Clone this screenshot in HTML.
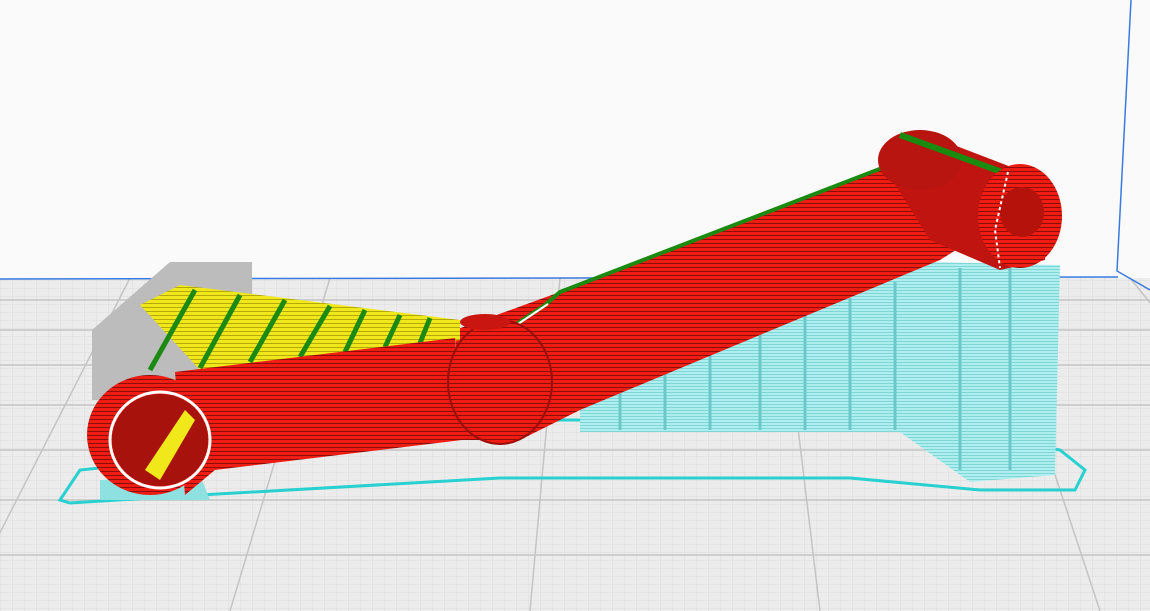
<!DOCTYPE html>
<html><head><style>html,body{margin:0;padding:0;background:#fafafa;overflow:hidden}svg{display:block}</style></head>
<body>
<svg width="1150" height="611" viewBox="0 0 1150 611" xmlns="http://www.w3.org/2000/svg">
<defs>
<pattern id="fine" width="12" height="8" patternUnits="userSpaceOnUse"><rect width="12" height="8" fill="#ececec"/><path d="M0 0H12M0 0V8" stroke="#dcdcdc" stroke-width="1"/></pattern>
<pattern id="stripe" width="6" height="4" patternUnits="userSpaceOnUse"><rect width="6" height="4" fill="#ee1c12"/><rect y="3" width="6" height="1" fill="#8a0e0a"/></pattern>
<pattern id="cyan" width="6" height="3" patternUnits="userSpaceOnUse"><rect width="6" height="3" fill="#aeeeee"/><rect y="2" width="6" height="1" fill="#7fd6d6"/></pattern>
<pattern id="yel" width="6" height="4" patternUnits="userSpaceOnUse"><rect width="6" height="4" fill="#f0e81a"/><rect y="3" width="6" height="1" fill="#b5a80a"/></pattern>
</defs>
<rect width="1150" height="611" fill="#fafafa"/>
<rect y="278" width="1150" height="333" fill="url(#fine)"/>
<g stroke="#c4c4c4" stroke-width="1.5" fill="none">
<path d="M0 300H1150M0 330H1150M0 365H1150M0 405H1150M0 450H1150M0 500H1150M0 555H1150"/>
<path d="M130 278L-40 611M330 278L230 611M560 278L530 611M780 278L820 611M990 278L1100 611M1130 278L1400 611"/>
</g>
<path d="M0 279L1118 277" stroke="#3a7ae0" stroke-width="1.5"/>
<path d="M1131 0L1117 271L1150 290" stroke="#3a7ae0" stroke-width="1.5" fill="none"/>
<polygon points="170,262 252,262 252,400 92,400 92,330" fill="#bcbcbc"/>
<path d="M60 500L80 470L560 420L880 420L1060 450L1085 470L1075 490L980 490L850 478L500 478L200 495L70 503Z" fill="none" stroke="#28d0d0" stroke-width="3"/>
<polygon points="580,400 930,262 1060,265 1055,475 970,482 900,432 580,432" fill="url(#cyan)"/>
<g stroke="#6cc8c8" stroke-width="3"><path d="M620 385V430M665 368V430M710 350V430M760 332V430M805 315V430M850 298V430M895 282V430M960 268V470M1010 268V470"/></g>
<polygon points="100,480 200,475 210,500 100,500" fill="#8fe0e0"/>
<polygon points="455,330 560,292 890,165 950,165 980,235 940,260 580,410 520,440 460,440" fill="url(#stripe)"/>
<path d="M515 325L545 305L560 292L890 165" stroke="#1a8a10" stroke-width="4" fill="none"/>
<path d="M518 324L548 304" stroke="#fff" stroke-width="2"/>
<polygon points="140,305 180,285 460,320 460,340 200,370" fill="url(#yel)"/>
<g stroke="#1b8a12" stroke-width="5"><path d="M195 290L150 370M240 295L200 368M285 300L250 362M330 306L300 357M365 310L345 352M400 315L385 347M430 318L420 343"/></g>
<polygon points="175,372 455,338 462,440 215,470 185,495" fill="url(#stripe)"/>
<ellipse cx="500" cy="382" rx="52" ry="62" fill="url(#stripe)" stroke="#9a0e0a" stroke-width="2"/>
<ellipse cx="485" cy="322" rx="25" ry="8" fill="#c91610"/>
<ellipse cx="150" cy="435" rx="63" ry="60" fill="url(#stripe)"/>
<ellipse cx="160" cy="440" rx="50" ry="48" fill="none" stroke="#fff" stroke-width="3"/>
<ellipse cx="160" cy="440" rx="48" ry="46" fill="#a8120c"/>
<polygon points="145,470 185,410 195,420 160,480" fill="#f0e81a"/>
<polygon points="880,160 920,132 1045,180 1045,260 1000,270 930,240" fill="#c01410"/>
<ellipse cx="920" cy="160" rx="42" ry="30" fill="#b81410"/>
<path d="M900 135L1010 175" stroke="#1a8a10" stroke-width="6"/>
<ellipse cx="1020" cy="216" rx="42" ry="52" fill="url(#stripe)"/>
<ellipse cx="1022" cy="212" rx="22" ry="25" fill="#b5120c"/>
<path d="M1008 172L995 230L1000 268" stroke="#fff" stroke-width="2" stroke-dasharray="3 3" fill="none"/>
</svg>
</body></html>
